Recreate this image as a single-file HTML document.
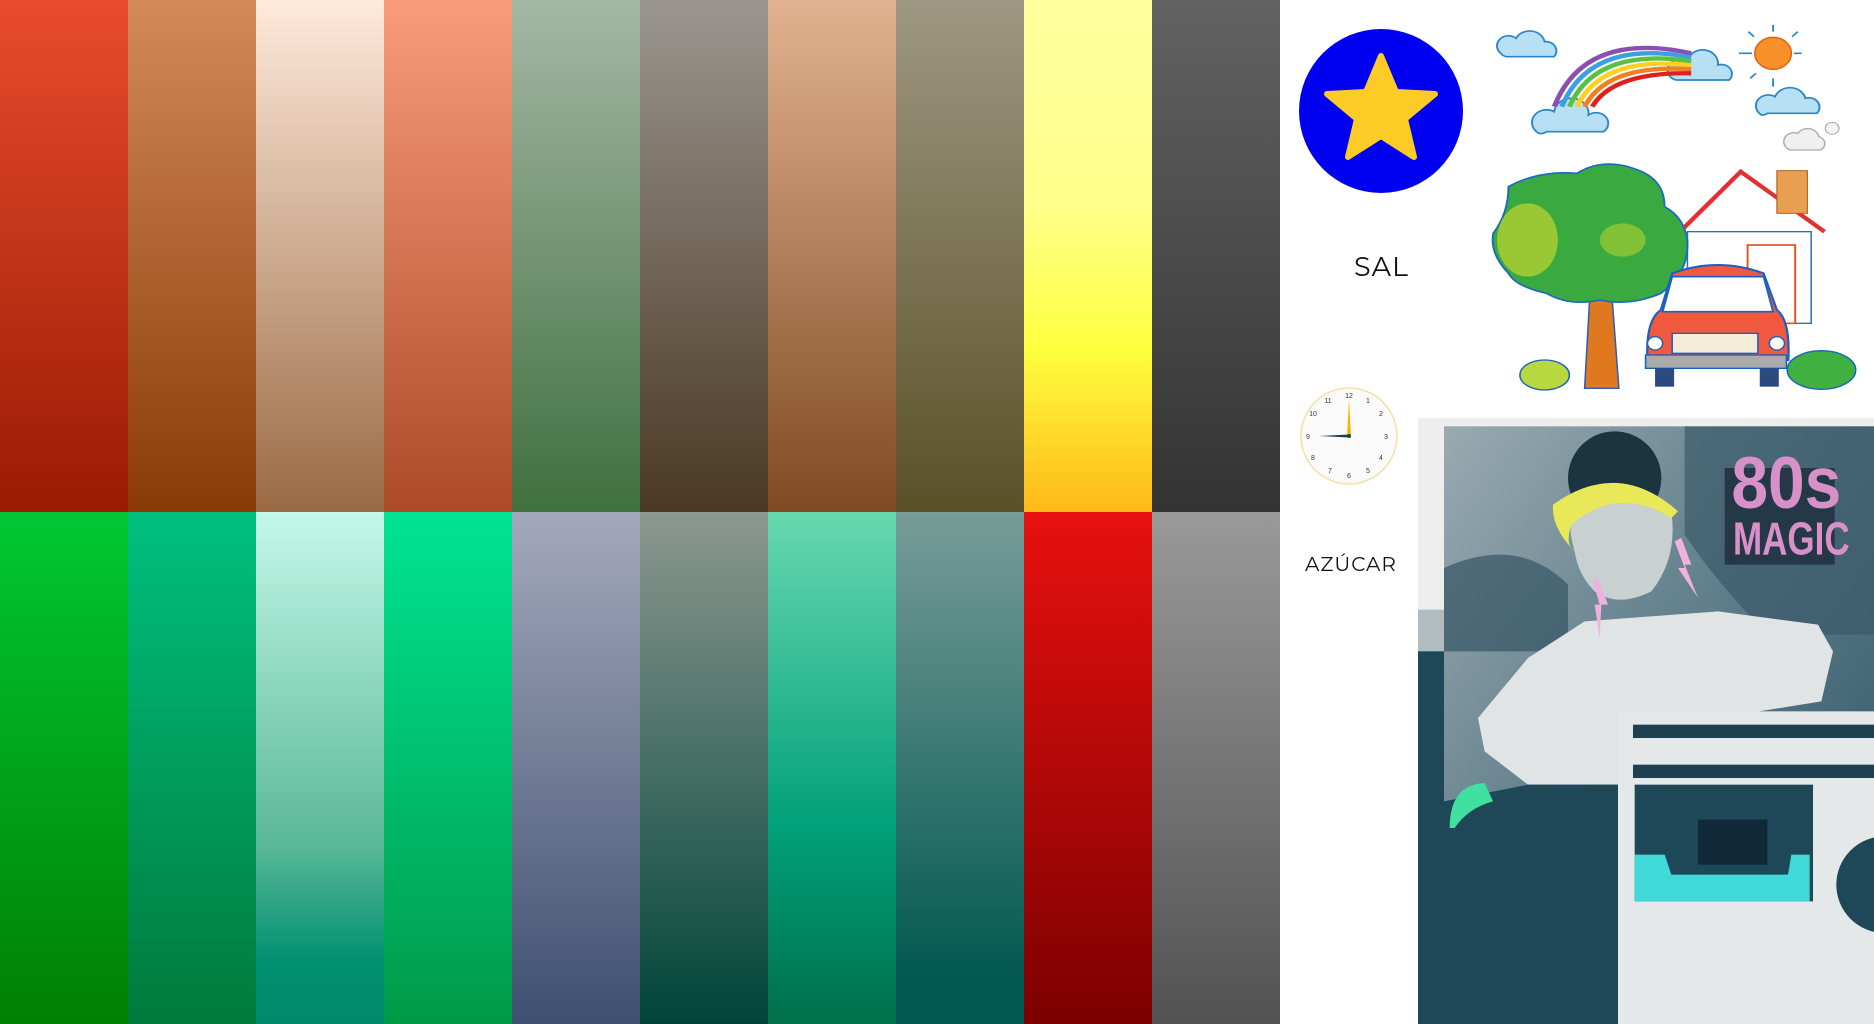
<!DOCTYPE html>
<html><head><meta charset="utf-8"><style>
*{margin:0;padding:0;box-sizing:border-box}
body{width:1874px;height:1024px;overflow:hidden;background:#fff;position:relative;font-family:"Montserrat","Liberation Sans",sans-serif}
.c{position:absolute;width:128px;height:512px}
.lbl{position:absolute;color:#111;letter-spacing:1px}
</style></head><body>
<div class="c" style="left:0;top:0;background:linear-gradient(#e84c2c,#9a1a04)"></div>
<div class="c" style="left:128px;top:0;background:linear-gradient(#d48a58,#8a3a06)"></div>
<div class="c" style="left:256px;top:0;background:linear-gradient(#ffeadb,#9a6a44)"></div>
<div class="c" style="left:384px;top:0;background:linear-gradient(#f89c7c,#ac4a28)"></div>
<div class="c" style="left:512px;top:0;background:linear-gradient(#a4b8a4,#407040)"></div>
<div class="c" style="left:640px;top:0;background:linear-gradient(#9a9690,#4a3822)"></div>
<div class="c" style="left:768px;top:0;background:linear-gradient(#e2b290,#804a22)"></div>
<div class="c" style="left:896px;top:0;background:linear-gradient(#9e9882,#5a5028)"></div>
<div class="c" style="left:1024px;top:0;background:linear-gradient(#ffffa0 0%,#ffff8a 40%,#ffff40 68%,#ffb818 100%)"></div>
<div class="c" style="left:1152px;top:0;background:linear-gradient(#626262,#333)"></div>

<div class="c" style="left:0;top:512px;background:linear-gradient(#00c834,#008000)"></div>
<div class="c" style="left:128px;top:512px;background:linear-gradient(#00c080,#007a3a)"></div>
<div class="c" style="left:256px;top:512px;background:linear-gradient(#c4f8e8,#5ab898 65%,#009070 88%,#008a6a)"></div>
<div class="c" style="left:384px;top:512px;background:linear-gradient(#00e494,#009a48)"></div>
<div class="c" style="left:512px;top:512px;background:linear-gradient(#a4a8bc,#3e5070)"></div>
<div class="c" style="left:640px;top:512px;background:linear-gradient(#8c9890,#004438)"></div>
<div class="c" style="left:768px;top:512px;background:linear-gradient(#68d8b0,#00a078 62%,#00704a)"></div>
<div class="c" style="left:896px;top:512px;background:linear-gradient(#789c98,#005850 92%,#005850)"></div>
<div class="c" style="left:1024px;top:512px;background:linear-gradient(#e81010,#7c0000)"></div>
<div class="c" style="left:1152px;top:512px;background:linear-gradient(#999,#525252)"></div>

<svg style="position:absolute;left:1299px;top:29px" width="164" height="164" viewBox="0 0 164 164">
<circle cx="82" cy="82" r="82" fill="#0000f0"/>
<path d="M82 27 L97 63 L136 65 L106 90 L115 128 L82 107 L49 128 L58 90 L28 65 L67 63 Z" fill="#fdcb25" stroke="#fdcb25" stroke-width="6" stroke-linejoin="round"/>
</svg>
<div class="lbl" style="left:1354px;top:250px;font-size:27px">SAL</div>

<svg style="position:absolute;left:1280px;top:0" width="594" height="420" viewBox="0 0 1560 1260" preserveAspectRatio="none">
<g fill="#b8e0f4" stroke="#2a86c8" stroke-width="5">
<path d="M580 160 a30 30 0 0 1 40 -45 a40 40 0 0 1 75 10 a28 28 0 0 1 25 45 h-125 a22 22 0 0 1 -15 -10z"/>
<path d="M1030 235 a30 30 0 0 1 40 -50 a40 40 0 0 1 80 10 a28 28 0 0 1 30 45 h-135 a22 22 0 0 1 -15 -5z"/>
<path d="M680 400 a32 32 0 0 1 40 -65 a45 45 0 0 1 90 10 a30 30 0 0 1 40 50 h-150 a22 22 0 0 1 -20 5z"/>
<path d="M1265 345 a30 30 0 0 1 35 -55 a42 42 0 0 1 80 5 a28 28 0 0 1 30 45 h-130 a22 22 0 0 1 -15 5z"/>
</g>
<path d="M1340 450 a25 25 0 0 1 20 -50 a30 30 0 0 1 55 10 a22 22 0 0 1 5 40 z" fill="#f0f0f0" stroke="#aaa" stroke-width="4"/>
<circle cx="1450" cy="385" r="18" fill="#f4f4f4" stroke="#aaa" stroke-width="3"/>
<g fill="none" stroke-width="13">
<path d="M720 320 Q800 90 1080 160" stroke="#8a4fb0"/>
<path d="M740 320 Q815 115 1080 172" stroke="#3aa0e0"/>
<path d="M760 320 Q830 140 1080 184" stroke="#5ac040"/>
<path d="M780 320 Q845 165 1080 196" stroke="#ffd020"/>
<path d="M800 320 Q860 190 1080 208" stroke="#f08020"/>
<path d="M820 320 Q875 215 1080 220" stroke="#e02020"/>
</g>
<circle cx="1295" cy="160" r="48" fill="#f8902a" stroke="#e06010" stroke-width="4"/>
<g stroke="#2a86c8" stroke-width="5"><path d="M1205 160h35M1350 160h20M1295 75v20M1295 235v25M1230 95l15 15M1360 95l-15 15M1235 235l15-15"/></g>
<path d="M1055 690 L1210 515 L1430 695" fill="#fff" stroke="#e03030" stroke-width="12"/>
<rect x="1070" y="695" width="325" height="275" fill="#fff" stroke="#2a70c0" stroke-width="4"/>
<rect x="1305" y="512" width="80" height="128" fill="#e8a050" stroke="#b06020" stroke-width="3"/>
<rect x="1228" y="735" width="125" height="235" fill="none" stroke="#e05020" stroke-width="5"/>
<rect x="1078" y="830" width="105" height="65" fill="#fff" stroke="#e05020" stroke-width="4"/>
<path d="M800 1165 L815 860 L770 790 L810 800 L835 760 L860 780 L895 760 L870 860 L890 1165 Z" fill="#e07820" stroke="#2a60b0" stroke-width="4"/>
<path d="M600 560 Q680 510 780 520 Q850 470 940 510 Q1010 540 1010 620 Q1060 650 1070 720 Q1075 820 1000 880 Q920 920 840 900 Q760 920 700 880 Q620 860 600 820 Q550 760 560 700 Q600 640 600 560Z" fill="#3aaa40" stroke="#1a6ac0" stroke-width="5"/>
<ellipse cx="650" cy="720" rx="80" ry="110" fill="#b0d030" opacity=".8"/>
<ellipse cx="900" cy="720" rx="60" ry="50" fill="#b0d030" opacity=".6"/>
<path d="M965 1080 Q960 960 1000 930 L1030 820 Q1150 770 1270 820 L1305 930 Q1340 960 1335 1080 Z" fill="#f05840" stroke="#1a60c0" stroke-width="6"/>
<path d="M1030 830 L1270 830 L1295 935 L1005 935 Z" fill="#fff" stroke="#1a60c0" stroke-width="5"/>
<circle cx="985" cy="1030" r="20" fill="#fff" stroke="#1a60c0" stroke-width="4"/>
<circle cx="1305" cy="1030" r="20" fill="#fff" stroke="#1a60c0" stroke-width="4"/>
<rect x="1030" y="1000" width="225" height="60" fill="#f4ecd8" stroke="#1a60c0" stroke-width="4"/>
<rect x="960" y="1065" width="370" height="40" fill="#aaa" stroke="#1a60c0" stroke-width="4"/>
<rect x="985" y="1105" width="50" height="55" fill="#2a4a80"/>
<rect x="1260" y="1105" width="50" height="55" fill="#2a4a80"/>
<ellipse cx="695" cy="1125" rx="65" ry="45" fill="#b8d840" stroke="#1a60c0" stroke-width="4"/>
<ellipse cx="1422" cy="1110" rx="90" ry="58" fill="#40b040" stroke="#1a60c0" stroke-width="4"/>
</svg>

<svg style="position:absolute;left:1299px;top:386px" width="100" height="100" viewBox="0 0 100 100">
<circle cx="50" cy="50" r="48" fill="#fafafa" stroke="#f6e0a8" stroke-width="1.5"/>
<g font-size="7" font-family="Liberation Sans" text-anchor="middle" fill="#333">
<text x="50" y="12">12</text><text x="69" y="17">1</text><text x="82" y="30">2</text><text x="87" y="53">3</text><text x="82" y="74">4</text><text x="69" y="87">5</text><text x="50" y="92">6</text><text x="31" y="87">7</text><text x="14" y="74">8</text><text x="9" y="53">9</text><text x="14" y="30">10</text><text x="29" y="17">11</text>
</g>
<path d="M50 13 L52 50 L48 50 Z" fill="#f5b800"/>
<path d="M20 50 L50 48.5 L50 51.5 Z" fill="#1a4050"/>
<circle cx="50" cy="50" r="2" fill="#1a4050"/>
</svg>
<div class="lbl" style="left:1305px;top:553px;font-size:20px">AZÚCAR</div>

<svg style="position:absolute;left:1418px;top:418px" width="456" height="606" viewBox="0 0 1368 1818">
<defs><linearGradient id="bg" x1="0" y1="0" x2="1" y2="1"><stop offset="0" stop-color="#9aaab0"/><stop offset=".5" stop-color="#5a7a88"/><stop offset="1" stop-color="#2a5062"/></linearGradient></defs>
<rect width="1368" height="1818" fill="#eeeeee"/>
<rect x="78" y="25" width="1290" height="1793" fill="url(#bg)"/>
<rect x="0" y="575" width="78" height="1243" fill="#b0bcc0"/>
<rect x="0" y="700" width="78" height="1118" fill="#1e4858"/>
<path d="M800 25 H1368 V650 H1050 Q900 500 800 350Z" fill="#3a5a6a" opacity=".7"/>
<path d="M78 450 Q300 350 450 500 L450 700 L78 700Z" fill="#2a4a5a" opacity=".6"/>
<ellipse cx="590" cy="180" rx="140" ry="140" fill="#1a3440"/>
<path d="M470 400 Q440 300 480 260 Q600 200 760 280 Q780 420 700 520 Q600 570 530 520 Q480 470 470 400Z" fill="#c8d0d0"/>
<path d="M405 260 Q600 120 780 280 L760 300 Q600 200 460 320 Q440 380 470 400 Q400 330 405 260Z" fill="#e8e858"/>
<path d="M180 900 L330 720 L500 610 L900 580 L1200 620 L1245 700 L1210 850 L900 900 L650 1100 L330 1100 L200 1000Z" fill="#e0e4e4"/>
<path d="M78 1150 L330 1100 L650 1100 L650 1818 L78 1818Z" fill="#1e4858"/>
<rect x="600" y="880" width="768" height="938" fill="#e4e8e8"/>
<rect x="645" y="920" width="723" height="40" fill="#1e4050"/>
<rect x="645" y="1040" width="723" height="40" fill="#1e4050"/>
<rect x="650" y="1100" width="535" height="350" fill="#1e4858"/>
<path d="M650 1310 H740 L760 1370 H1110 L1120 1310 H1175 V1450 H650Z" fill="#40d8d8"/>
<rect x="840" y="1205" width="208" height="135" fill="#102838"/>
<circle cx="1400" cy="1400" r="160" fill="#1e4858" stroke="#e4e8e8" stroke-width="30"/>
<path d="M95 1230 Q95 1100 200 1095 L225 1150 Q150 1170 110 1230Z" fill="#40e0a0"/>
<path d="M790 360 L820 440 L800 440 L840 540 L780 450 L800 450 L770 370Z" fill="#f0b0e0"/>
<path d="M540 480 L570 560 L550 560 L545 660 L530 560 L545 560 L525 490Z" fill="#f0b0e0"/>
<rect x="920" y="150" width="330" height="290" fill="#203040" opacity=".85"/>
<g font-family="Liberation Sans" font-weight="bold" fill="#d890c8">
<text x="940" y="270" font-size="220" textLength="330" lengthAdjust="spacingAndGlyphs">80s</text>
<text x="945" y="410" font-size="140" textLength="350" lengthAdjust="spacingAndGlyphs">MAGIC</text>
</g>
</svg>
</body></html>
